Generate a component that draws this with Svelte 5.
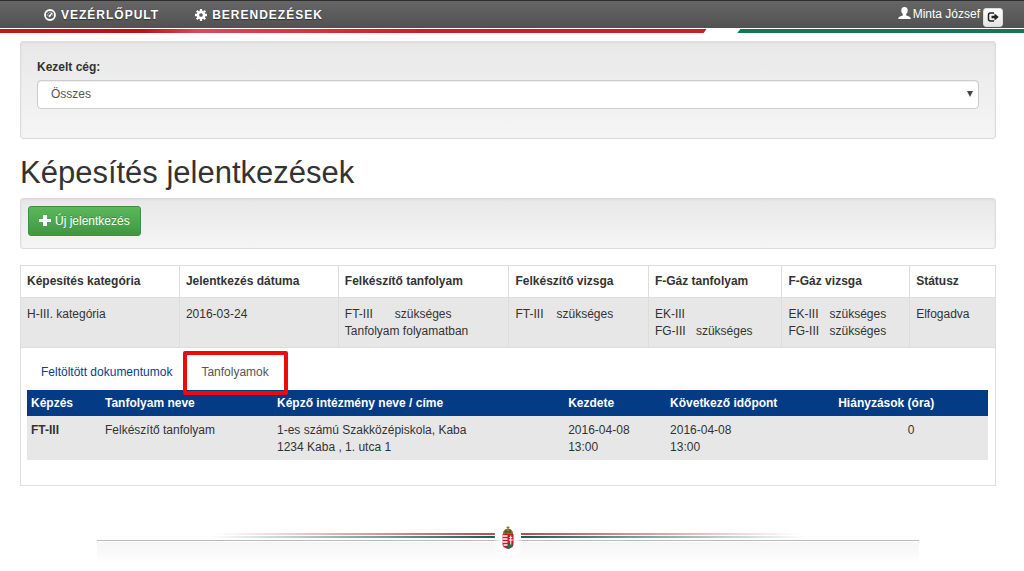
<script lang="ts">
  type Exam = { code?: string; text: string };

  const columns = [
    { label: 'Képesítés kategória', width: 16.3 },
    { label: 'Jelentkezés dátuma', width: 16.3 },
    { label: 'Felkészítő tanfolyam', width: 17.5 },
    { label: 'Felkészítő vizsga', width: 14.3 },
    { label: 'F-Gáz tanfolyam', width: 13.7 },
    { label: 'F-Gáz vizsga', width: 13.1 },
    { label: 'Státusz', width: 8.8 },
  ];

  const cells: Exam[][] = [
    [{ text: 'H-III. kategória' }],
    [{ text: '2016-03-24' }],
    [{ code: 'FT-III', text: 'szükséges' }, { text: 'Tanfolyam folyamatban' }],
    [{ code: 'FT-III', text: 'szükséges' }],
    [{ code: 'EK-III', text: '' }, { code: 'FG-III', text: 'szükséges' }],
    [{ code: 'EK-III', text: 'szükséges' }, { code: 'FG-III', text: 'szükséges' }],
    [{ text: 'Elfogadva' }],
  ];

  const courseColumns = [
    { label: 'Képzés', width: 7.7 },
    { label: 'Tanfolyam neve', width: 17.9 },
    { label: 'Képző intézmény neve / címe', width: 30.3 },
    { label: 'Kezdete', width: 10.6 },
    { label: 'Következő időpont', width: 17.5 },
    { label: 'Hiányzások (óra)', width: 16 },
  ];

  const courses = [
    {
      code: 'FT-III',
      name: 'Felkészítő tanfolyam',
      school: '1-es számú Szakközépiskola, Kaba',
      address: '1234 Kaba , 1. utca 1',
      start: ['2016-04-08', '13:00'],
      next: ['2016-04-08', '13:00'],
      missed: 0,
    },
  ];

  let company = $state('all');
</script>

<header>
  <nav class="topbar">
    <a class="nav-link" href="#vezerlopult">
      <svg width="12" height="12" viewBox="0 0 24 24" fill="none" stroke="currentColor"><circle cx="12" cy="12" r="10" stroke-width="3.6"/><path d="M11 14.500l5.500-7" stroke-width="2.600"/><path d="M5.500 12h2M7.500 7.500l1.500 1.500M12 5.500v2M16.500 12h2" stroke-width="1.800"/><circle cx="11" cy="14" r="1.600" fill="currentColor"/></svg>
      Vezérlőpult
    </a>
    <a class="nav-link" href="#berendezesek">
      <svg width="12" height="12" viewBox="0 0 24 24" fill="none" stroke="currentColor"><circle cx="12" cy="12" r="6.200" stroke-width="5"/><path d="M12 0v5M12 19v5M0 12h5M19 12h5M3.500 3.500l3.600 3.600M16.900 16.900l3.600 3.600M3.500 20.500l3.600-3.600M16.900 7.100l3.600-3.600" stroke-width="4.600"/></svg>
      Berendezések
    </a>
    <div class="user">
      <svg width="13" height="13" viewBox="0 0 26 26" fill="currentColor"><path d="M13 0c4.500 0 6.500 2.800 6.500 7 0 3.200-1.500 6-3.300 7.500v2l6.800 2.800c2 .9 2.800 2.300 2.800 4.700H.2c0-2.400.8-3.800 2.800-4.700l6.800-2.800v-2C8 13 6.500 10.200 6.500 7c0-4.200 2-7 6.500-7z"/></svg>
      <span>Minta József</span>
      <button class="logout" aria-label="Kijelentkezés">
        <svg width="12" height="12" viewBox="0 0 24 24"><path d="M14 4H7a4 4 0 0 0-4 4v8a4 4 0 0 0 4 4h7" fill="none" stroke="currentColor" stroke-width="3"/><path d="M9 9.500h6V5l8.500 7-8.500 7v-4.500H9z" fill="currentColor"/></svg>
      </button>
    </div>
  </nav>
  <div class="tricolor"><span class="red"></span><span class="green"></span></div>
</header>

<main>
  <section class="well filter">
    <label for="company">Kezelt cég:</label>
    <div class="select-wrap">
      <select id="company" bind:value={company}>
        <option value="all">Összes</option>
      </select>
      <svg class="caret" width="6" height="6" viewBox="0 0 6 6"><path d="M0 0h6L3 6z" fill="currentColor"/></svg>
    </div>
  </section>

  <h1>Képesítés jelentkezések</h1>

  <section class="well toolbar">
    <button class="btn-success">
      <svg width="12" height="12" viewBox="0 0 12 12" fill="currentColor"><path d="M4 0h4v4h4v3H8v4H4V7H0V4h4z"/></svg>
      Új jelentkezés
    </button>
  </section>

  <table class="applications">
    <colgroup>
      {#each columns as col}
        <col style="width: {col.width}%" />
      {/each}
    </colgroup>
    <thead>
      <tr>
        {#each columns as col}
          <th>{col.label}</th>
        {/each}
      </tr>
    </thead>
    <tbody>
      <tr class="striped">
        {#each cells as lines, i}
          <td class:wide={i === 2}>
            {#each lines as line}
              <div>{#if line.code}<span class="code">{line.code}</span>{/if}{line.text}</div>
            {/each}
          </td>
        {/each}
      </tr>
      <tr>
        <td class="details" colspan={columns.length}>
          <ul class="tabs">
            <li><a href="#dokumentumok">Feltöltött dokumentumok</a></li>
            <li class="active marked"><a href="#tanfolyamok">Tanfolyamok</a></li>
          </ul>
          <table class="courses">
            <colgroup>
              {#each courseColumns as col}
                <col style="width: {col.width}%" />
              {/each}
            </colgroup>
            <thead>
              <tr>
                {#each courseColumns as col}
                  <th>{col.label}</th>
                {/each}
              </tr>
            </thead>
            <tbody>
              {#each courses as course}
                <tr>
                  <td><b>{course.code}</b></td>
                  <td>{course.name}</td>
                  <td>{course.school}<br />{course.address}</td>
                  <td>{course.start[0]}<br />{course.start[1]}</td>
                  <td>{course.next[0]}<br />{course.next[1]}</td>
                  <td class="center">{course.missed}</td>
                </tr>
              {/each}
            </tbody>
          </table>
        </td>
      </tr>
    </tbody>
  </table>

  <footer>
    <div class="stripes left"></div>
    <svg class="crest" width="14" height="24" viewBox="0 0 28 48">
      <path d="M14 0v6M11 3h6" stroke="#8a7a32" stroke-width="2"/>
      <path d="M4 16c-1-6 4-10 10-11 6 1 11 5 10 11z" fill="#8b762c"/>
      <path d="M7 12h14M10 7v8M18 7v8" stroke="#4f4a22" stroke-width="2"/>
      <path d="M3 16h22v20c0 6-5 8-11 10C8 44 3 42 3 36z" fill="#c5182c"/>
      <path d="M3 20h10M3 26h10M3 32h10M5 38h8" stroke="#fff" stroke-width="2.600"/>
      <path d="M14 37c4-3 8-3 10 0-1 5-5 8-10 9z" fill="#2d6846"/>
      <path d="M19.500 19v18M16.500 23h6M15.500 28h8" stroke="#fff" stroke-width="2"/>
    </svg>
    <div class="stripes right"></div>
  </footer>
</main>

<style>
  :global(body) {
    background: #fff;
    color: #333;
    font-family: "Liberation Sans", Arial, sans-serif;
    font-size: 12px;
    line-height: 17px;
  }

  .topbar {
    display: flex;
    align-items: center;
    height: 28px;
    box-sizing: border-box;
    padding: 2px 21px 0 44px;
    border-top: 1px solid #2d2c30;
    background: linear-gradient(#666, #515151);
    color: #fff;
  }

  .nav-link {
    display: flex;
    align-items: center;
    gap: 5px;
    margin-right: 36px;
    color: #fff;
    font-weight: bold;
    letter-spacing: 1px;
    text-transform: uppercase;
    text-decoration: none;
    text-shadow: 0 1px 1px #333;
  }
  .nav-link svg { margin-bottom: 2px; }

  .user { display: flex; align-items: center; gap: 2px; margin-left: auto; }

  .user span { padding-bottom: 2px; }
  .user > svg { margin-bottom: 4px; }

  .logout {
    display: flex;
    align-items: center;
    justify-content: center;
    width: 20px;
    height: 19px;
    margin: 3px 0 0 1px;
    padding: 0;
    border: 1px solid #ddd;
    border-radius: 3px;
    background: linear-gradient(#fff, #e4e4e4);
    color: #222;
  }

  .tricolor { display: flex; justify-content: space-between; height: 4px; padding-top: 1px; }
  .tricolor span { height: 4px; }
  .red { width: 69%; background: linear-gradient(90deg, #c4161f, #b8101a 20%, #d84a58 28%, #c81e2c 60%, #c4202b); clip-path: polygon(0 0, 100% 0, calc(100% - 3px) 100%, 0 100%); }
  .green { width: 28%; background: #147657; clip-path: polygon(3px 0, 100% 0, 100% 100%, 0 100%); }

  main { padding: 8px 28px 0 20px; }

  .well {
    box-sizing: border-box;
    border: 1px solid #dcdcdc;
    border-radius: 3px;
    background: linear-gradient(#e8e8e8, #f5f5f5);
    box-shadow: inset 0 1px 3px rgba(0, 0, 0, 0.05);
  }

  .filter { padding: 17px 16px 29px; }
  .filter label { display: block; margin-bottom: 4px; font-weight: bold; }

  .select-wrap { position: relative; }

  select {
    display: block;
    width: 100%;
    height: 29px;
    padding: 0 13px;
    border: 1px solid #ccc;
    border-radius: 4px;
    appearance: none;
    background: #fff;
    box-shadow: inset 0 1px 1px rgba(0, 0, 0, 0.075);
    color: #555;
    font: inherit;
  }

  .caret { position: absolute; top: 11px; right: 6px; color: #444; pointer-events: none; }

  h1 {
    margin: 17px 0 8px;
    font-size: 31px;
    font-weight: normal;
    line-height: 34px;
  }

  .toolbar { padding: 7px 7px 12px; }

  .btn-success {
    display: flex;
    align-items: center;
    gap: 4px;
    height: 30px;
    padding: 0 10px;
    border: 1px solid #3e8f3e;
    border-radius: 3px;
    background: linear-gradient(#5cb85c, #419641);
    color: #fff;
    font: inherit;
    text-shadow: 0 -1px 0 rgba(0, 0, 0, 0.2);
  }

  table { width: 100%; border-collapse: collapse; table-layout: fixed; }
  th, td { text-align: left; vertical-align: top; }

  .applications { margin-top: 16px; border: 1px solid #ddd; }
  .applications > thead th { padding: 7px 6px; border: 1px solid #ddd; }
  .applications > tbody > tr > td { padding: 8px 6px 7px; border: 1px solid #ddd; }
  .striped { background: #e7e7e7; }

  .code { display: inline-block; width: 41px; }
  .wide .code { width: 50px; }

  .applications > tbody > tr > td.details { padding: 8px 7px 25px 6px; }

  .tabs { display: flex; gap: 1px; margin: 0; padding: 0; list-style: none; }
  .tabs a { display: block; padding: 8px 14px 9px; color: #05418c; text-decoration: none; }
  .tabs .active a { color: #555; }

  .marked { position: relative; }
  .marked::after {
    content: "";
    position: absolute;
    inset: -5px -5px -5px -4px;
    border: 4px solid #ee0a0a;
    border-radius: 2px;
    pointer-events: none;
  }

  .courses th { padding: 5px 4px 4px; background: #043b85; color: #fff; }
  .courses td { padding: 6px 4px 4px; background: #e7e7e7; }
  .courses .center { text-align: center; }

  footer {
    display: flex;
    justify-content: center;
    gap: 6px;
    height: 46px;
    margin: 38px 77px 0;
    background: linear-gradient(#bbb, #bbb) 0 16px / 100% 1px no-repeat, linear-gradient(#f5f5f5, #fff) 0 18px / 100% 22px no-repeat;
  }

  .stripes { flex: 1; height: 5px; margin-top: 9px; }
  .left { background: linear-gradient(90deg, transparent 30%, #c04450) 0 0 / 100% 2px no-repeat, linear-gradient(90deg, transparent 28%, #0b6650) 0 100% / 100% 2px no-repeat; }
  .right { background: linear-gradient(270deg, transparent 30%, #c04450) 0 0 / 100% 2px no-repeat, linear-gradient(270deg, transparent 28%, #0b6650) 0 100% / 100% 2px no-repeat; }
  .crest { margin-top: 2px; background: #fff; box-shadow: 0 0 4px 4px #fff; }
</style>
